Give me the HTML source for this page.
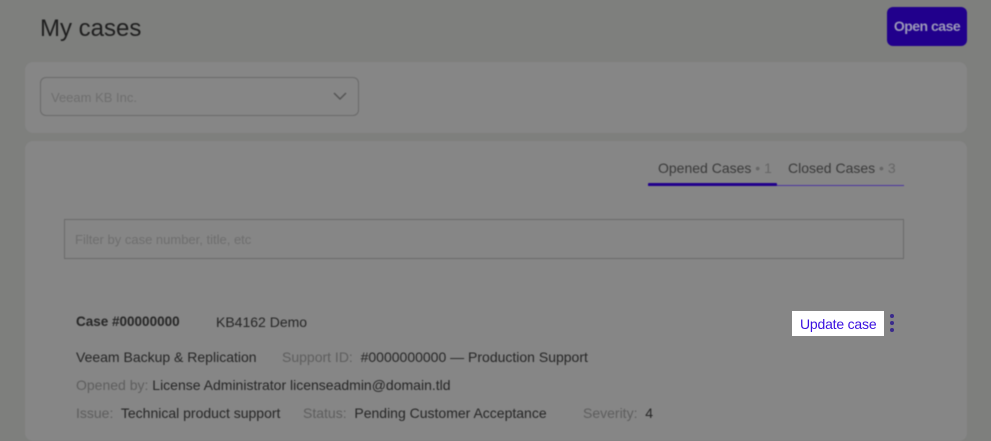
<!DOCTYPE html>
<html><head><style>
body{margin:0;width:991px;height:433px;background:#7e7f7d;font-family:"Liberation Sans",sans-serif;position:relative;overflow:hidden}
.a{position:absolute}
.blur{filter:blur(0.5px)}
.t{font-size:14px;color:#262626}
.g{color:#5e5e5e}
</style></head><body>
<div class="blur">
<div class="a" style="left:40px;top:15px;font-size:24px;color:#1f1f1f">My cases</div>
<div class="a" style="left:887px;top:7px;width:80px;height:39px;background:#21008c;border-radius:6px;color:#9c9ab8;font-size:14px;font-weight:bold;line-height:39px;text-align:center;letter-spacing:-0.5px">Open case</div>
<div class="a" style="left:25px;top:62px;width:942px;height:71px;background:#868686;border-radius:8px"></div>
<div class="a" style="left:40px;top:77px;width:319px;height:39px;border:1px solid #6a6a6a;border-radius:6px;box-sizing:border-box"></div>
<div class="a" style="left:51px;top:90px;font-size:13px;color:#6e6e6e">Veeam KB Inc.</div>
<svg class="a" style="left:332px;top:90px" width="16" height="12"><path d="M2 3 L8 9 L14 3" stroke="#555" stroke-width="1.5" fill="none"/></svg>
<div class="a" style="left:25px;top:141px;width:942px;height:300px;background:#868686;border-radius:8px"></div>
<div class="a" style="left:658px;top:160px;font-size:14px;color:#3a3a3a">Opened Cases <span style="color:#666">• 1</span></div>
<div class="a" style="left:788px;top:160px;font-size:14px;color:#3a3a3a">Closed Cases <span style="color:#666">• 3</span></div>
<div class="a" style="left:648px;top:185px;width:256px;height:1px;background:#4b35a0"></div>
<div class="a" style="left:648px;top:183px;width:129px;height:3px;background:#21008c;border-radius:1px"></div>
<div class="a" style="left:64px;top:219px;width:840px;height:40px;border:1px solid #6a6a6a;box-sizing:border-box"></div>
<div class="a" style="left:75px;top:232px;font-size:13px;color:#6e6e6e">Filter by case number, title, etc</div>
<div class="a t" style="left:76px;top:314px;font-weight:bold;font-size:13.5px">Case #00000000</div>
<div class="a t" style="left:216px;top:314px">KB4162 Demo</div>
<div class="a t" style="left:76px;top:349px">Veeam Backup &amp; Replication</div>
<div class="a t" style="left:282px;top:349px"><span class="g">Support ID:</span>&nbsp; #0000000000 — Production Support</div>
<div class="a t" style="left:76px;top:377px"><span class="g">Opened by:</span> License Administrator licenseadmin@domain.tld</div>
<div class="a t" style="left:76px;top:405px"><span class="g">Issue:</span>&nbsp; Technical product support</div>
<div class="a t" style="left:303px;top:405px"><span class="g">Status:</span>&nbsp; Pending Customer Acceptance</div>
<div class="a t" style="left:583px;top:405px"><span class="g">Severity:</span>&nbsp; 4</div>
</div>
<div class="a" style="left:792px;top:311px;width:92px;height:25px;background:#fff"></div>
<div class="a" style="left:800px;top:316px;font-size:14px;color:#3a10e0;letter-spacing:-0.2px">Update case</div>
<div class="a" style="left:890px;top:314px;width:4px;height:4px;border-radius:2px;background:#3a2a8c;box-shadow:0 7px 0 #3a2a8c,0 14px 0 #3a2a8c"></div>
</body></html>
